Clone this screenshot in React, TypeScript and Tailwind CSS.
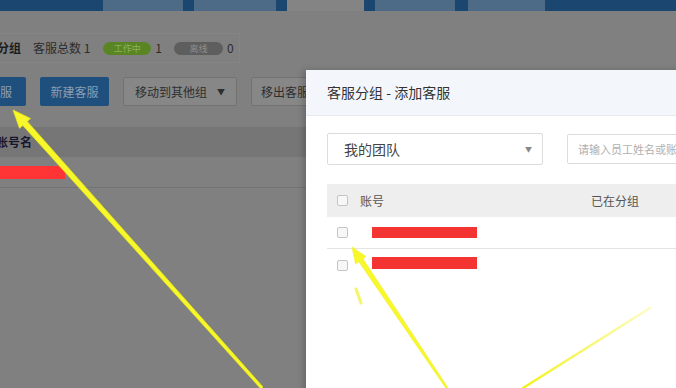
import React from 'react';

const font = { fontFamily: '"Noto Sans CJK SC", "Noto Sans", sans-serif' };

function Checkbox() {
  return <span className="inline-block w-[11px] h-[11px] rounded-[2px] border border-[#c4c4c4] bg-[#f7f7f7] shrink-0" />;
}

function PageBehind() {
  return (
    <div className="flex flex-col w-full h-full bg-[#808080] text-[12px] text-[#262626]">
      {/* top nav */}
      <div className="flex h-[11px] bg-[#1a4670] shrink-0">
        <div className="w-[103px]" />
        <div className="w-[80px] bg-[#4d6a86]" />
        <div className="w-[11px]" />
        <div className="w-[82px] bg-[#4d6a86]" />
        <div className="w-[11px]" />
        <div className="w-[77px] bg-[#848484]" />
        <div className="w-[11px]" />
        <div className="w-[80px] bg-[#4d6a86]" />
        <div className="w-[13px]" />
        <div className="w-[77px] bg-[#4d6a86]" />
      </div>

      {/* summary */}
      <div className="mt-[22px] h-[30px] w-[240px] flex items-center border border-[#858585] border-l-0">
        <span className="-ml-[3px] font-bold text-[#1c1c1c] w-[36px]">分组</span>
        <span className="text-[#2c2c2c]">客服总数 1</span>
        <span className="ml-[13px] w-[48px] h-[13px] rounded-full bg-[#5a8524] text-[9px] leading-[13px] text-[#8cb25c] text-center">工作中</span>
        <span className="ml-[4px] text-[#2c2c2c]">1</span>
        <span className="ml-[12px] w-[49px] h-[13px] rounded-full bg-[#5e5e5e] text-[9px] leading-[13px] text-[#8e8e8e] text-center">离线</span>
        <span className="ml-[4px] text-[#2c2c2c]">0</span>
      </div>

      {/* buttons */}
      <div className="mt-[14px] h-[29px] flex items-stretch gap-[14px] w-[306px] overflow-hidden">
        <div className="-ml-[50px] w-[76px] shrink-0 rounded-[2px] bg-[#1f4f7c] text-[#8a9fb4] flex items-center justify-center">添加客服</div>
        <div className="w-[69px] shrink-0 rounded-[2px] bg-[#1f4f7c] text-[#8a9fb4] flex items-center justify-center">新建客服</div>
        <div className="w-[114px] shrink-0 rounded-[2px] border border-[#727272] bg-[#878787] text-[#2e2e2e] flex items-center justify-center gap-[10px]">
          <span>移动到其他组</span>
          <span className="text-[8px]">▼</span>
        </div>
        <div className="w-[70px] shrink-0 rounded-[2px] border border-[#727272] bg-[#878787] text-[#2e2e2e] flex items-center pl-[9px]">移出客服</div>
      </div>

      {/* table */}
      <div className="mt-[21px] w-[306px]">
        <div className="h-[30px] bg-[#767676] flex items-center">
          <span className="-ml-[4px] font-bold text-[#171730]">账号名</span>
        </div>
        <div className="h-[31px] flex items-center border-b border-[#737373]">
          <span className="w-[65px] h-[13px] bg-[#ff3535]" />
        </div>
      </div>
    </div>
  );
}

function AddDialog() {
  return (
    <div className="absolute left-[306px] top-[70px] w-[400px] h-[330px] bg-white shadow-[-3px_0_6px_rgba(0,0,0,0.18)] flex flex-col">
      <div className="h-[46px] bg-[#f3f7fc] border-b border-[#e6eaf0] flex items-center pl-[21px] text-[14px] text-[#333]">
        客服分组 - 添加客服
      </div>
      <div className="px-[21px] pt-[17px]">
        <div className="flex items-center gap-[24px]">
          <div className="w-[216px] h-[32px] shrink-0 border border-[#dcdcdc] rounded-[2px] flex items-center justify-between pl-[16px] pr-[10px] text-[14px] text-[#444]">
            <span>我的团队</span>
            <span className="text-[7px] text-[#888]">▼</span>
          </div>
          <div className="w-[200px] h-[30px] shrink-0 border border-[#dcdcdc] rounded-[2px] flex items-center pl-[10px] text-[11px] text-[#b0b0b0] whitespace-nowrap">
            请输入员工姓名或账号
          </div>
        </div>

        <div className="mt-[19px] w-[400px]">
          <div className="h-[33px] bg-[#eeeeee] flex items-center pl-[10px] text-[12px] text-[#555]">
            <Checkbox />
            <span className="ml-[12px] w-[231px]">账号</span>
            <span>已在分组</span>
          </div>
          <div className="h-[32px] flex items-center pl-[10px] border-b border-[#e4e4e4]">
            <Checkbox />
            <span className="ml-[24px] w-[105px] h-[11px] bg-[#f43333]" />
          </div>
          <div className="h-[32px] flex items-center pl-[10px]">
            <div className="-mt-[2px]">
              <Checkbox />
            </div>
            <span className="ml-[24px] -mt-[5px] w-[105px] h-[12px] bg-[#f43333]" />
          </div>
        </div>
      </div>
    </div>
  );
}

function Arrows() {
  return (
    <svg className="absolute inset-0 pointer-events-none" width="676" height="388" viewBox="0 0 676 388">
      <defs>
        <linearGradient id="fade" x1="523" y1="388" x2="650" y2="308" gradientUnits="userSpaceOnUse">
          <stop offset="0" stopColor="#f2f21c" stopOpacity="1" />
          <stop offset="1" stopColor="#f2f21c" stopOpacity="0.25" />
        </linearGradient>
      </defs>
      <polygon
        points="13,110 30.5,118.5 27.2,121.4 263,387 261,389 22.8,125.4 19.5,128.3"
        fill="#f7f72a"
        stroke="#e4e41a"
        strokeWidth="0.8"
        strokeLinejoin="round"
      />
      <polygon
        points="352,247 366,256.5 363,258.9 447.8,387.4 446.2,388.6 358.8,261.7 355.5,264"
        fill="#f7f72a"
        stroke="#eeee30"
        strokeWidth="0.6"
        strokeLinejoin="round"
      />
      <line x1="523" y1="388" x2="650" y2="308" stroke="url(#fade)" strokeWidth="2.5" strokeLinecap="round" />
      <line x1="356" y1="289" x2="361" y2="303" stroke="#f3f340" strokeWidth="3" strokeLinecap="round" opacity="0.8" />
    </svg>
  );
}

export default function App() {
  return (
    <div className="relative w-[676px] h-[388px] overflow-hidden" style={font}>
      <PageBehind />
      <AddDialog />
      <Arrows />
    </div>
  );
}
